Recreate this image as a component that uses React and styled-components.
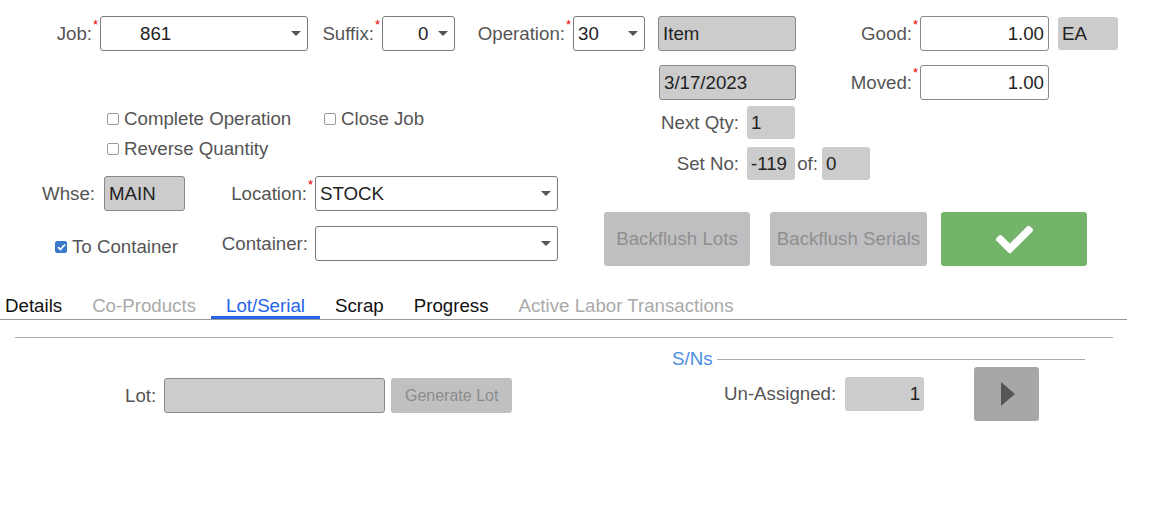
import styled, { createGlobalStyle } from "styled-components";
import { FaCheck } from "react-icons/fa";

const GlobalStyle = createGlobalStyle`
  body {
    margin: 0;
    background: #fff;
    font-family: "Liberation Sans", Arial, sans-serif;
    font-size: 18.7px;
    color: #222;
  }
`;

const Page = styled.div`
  width: 1171px;
`;

const TopRow = styled.div`
  display: flex;
  align-items: center;
  height: 35px;
  padding-top: 16px;
`;

const Label = styled.div`
  display: flex;
  justify-content: flex-end;
  align-items: center;
  align-self: stretch;
  box-sizing: border-box;
  width: ${(p) => p.$w}px;
  padding-left: ${(p) => p.$pl || 0}px;
  padding-right: ${(p) => p.$pr || 0}px;
  color: #555;
  white-space: nowrap;
`;

const Req = styled.span`
  align-self: flex-start;
  width: 7px;
  margin-top: 2px;
  padding-left: 1px;
  color: #e00;
  font-size: 13px;
  line-height: 1;
`;

const Select = styled.div`
  display: flex;
  align-items: center;
  box-sizing: border-box;
  width: ${(p) => p.$w}px;
  height: 35px;
  padding-left: ${(p) => p.$pl ?? 4}px;
  padding-right: 6px;
  border: 1px solid #7a7a7a;
  border-radius: 3px;
  background: #fff;
  color: #222;
`;

const Caret = styled.span`
  margin-left: auto;
  width: 0;
  height: 0;
  border-left: 5px solid transparent;
  border-right: 5px solid transparent;
  border-top: 5px solid #555;
`;

const Field = styled.div`
  display: flex;
  align-items: center;
  justify-content: ${(p) => (p.$right ? "flex-end" : "flex-start")};
  box-sizing: border-box;
  width: ${(p) => p.$w}px;
  height: ${(p) => p.$h || 35}px;
  padding: 0 4px;
  background: ${(p) => (p.$grey ? "#cccccc" : "#fff")};
  border: ${(p) => (p.$bare ? "none" : "1px solid #888")};
  border-radius: 3px;
  color: #222;
  white-space: nowrap;
`;

const Spacer = styled.div`
  width: ${(p) => p.$w}px;
  flex: none;
`;

const Section = styled.div`
  display: flex;
  align-items: flex-start;
`;

const LeftCol = styled.div`
  width: 604px;
  padding-top: 57px;
`;

const RightCol = styled.div`
  flex: 1;
  padding-top: 13px;
`;

const CheckRow = styled.div`
  display: flex;
  align-items: center;
  height: 22px;
  padding-left: 107px;
  margin-top: ${(p) => p.$mt || 0}px;
`;

const CheckItem = styled.label`
  display: flex;
  align-items: center;
  gap: 5px;
  width: ${(p) => (p.$w ? `${p.$w}px` : "auto")};
  color: #555;
  white-space: nowrap;
`;

const Box = styled.span`
  display: flex;
  align-items: center;
  justify-content: center;
  box-sizing: border-box;
  width: 12px;
  height: 12px;
  border: 1px solid ${(p) => (p.$on ? "#3a78c9" : "#9a9a9a")};
  border-radius: 2px;
  background: ${(p) => (p.$on ? "#3a78c9" : "#fff")};
`;

const WhseGrid = styled.div`
  display: grid;
  grid-template-columns: 104px 81px 130px 243px;
  grid-auto-rows: 35px;
  row-gap: 15px;
  margin-top: 16px;
`;

const ToContainer = styled.div`
  grid-column: 1 / 3;
  display: flex;
  align-items: center;
  padding-left: 55px;
  padding-top: 7px;
`;

const RRow = styled.div`
  display: flex;
  align-items: center;
  height: ${(p) => p.$h}px;
  margin-top: ${(p) => p.$mt || 0}px;
  padding-left: ${(p) => p.$pl || 0}px;
`;

const ActionButton = styled.div`
  display: flex;
  align-items: center;
  justify-content: center;
  box-sizing: border-box;
  width: ${(p) => p.$w}px;
  height: 54px;
  margin-right: ${(p) => p.$mr || 0}px;
  border-radius: 3px;
  background: ${(p) => (p.$ok ? "#74b36a" : "#bfbfc1")};
  color: ${(p) => (p.$ok ? "#fff" : "#8f8f8f")};
  white-space: nowrap;
`;

const TabBar = styled.div`
  display: flex;
  width: 1127px;
  margin-top: 25px;
  border-bottom: 1px solid #999;
`;

const Tab = styled.div`
  box-sizing: border-box;
  height: 28px;
  padding: 5px 15px 0;
  line-height: 20px;
  border-bottom: 3px solid ${(p) => (p.$active ? "#2563eb" : "transparent")};
  color: ${(p) => (p.$active ? "#2563eb" : p.$off ? "#aaaaaa" : "#111")};
  white-space: nowrap;

  &:first-child {
    padding-left: 5px;
  }
`;

const Panel = styled.div`
  display: flex;
  width: 1098px;
  margin: 17px 0 0 15px;
  border-top: 1px solid #aaa;
`;

const LotPane = styled.div`
  width: 657px;
  padding: 40px 0 0 110px;
  box-sizing: border-box;
  display: flex;
  align-items: center;
  align-self: flex-start;
`;

const LotLabel = styled.span`
  color: #555;
  margin-right: 8px;
`;

const GenButton = styled.div`
  display: flex;
  align-items: center;
  justify-content: center;
  width: 121px;
  height: 35px;
  margin-left: 6px;
  border-radius: 3px;
  background: #c0c0c0;
  color: #8c8c8c;
  font-size: 16px;
`;

const SnPane = styled.div`
  width: 413px;
  padding-top: 13px;
`;

const Legend = styled.div`
  display: flex;
  align-items: center;
  height: 16px;
  line-height: 16px;
  color: #4a8ee0;
`;

const LegendLine = styled.div`
  flex: 1;
  height: 1px;
  margin-left: 4px;
  background: #aaa;
`;

const SnRow = styled.div`
  display: flex;
  align-items: center;
  padding-left: 52px;
`;

const SnLabel = styled.span`
  color: #555;
  margin-right: 9px;
`;

const PlayButton = styled.div`
  display: flex;
  align-items: center;
  justify-content: center;
  width: 65px;
  height: 54px;
  margin-left: 50px;
  border-radius: 3px;
  background: #a7a7a9;
`;

const Triangle = styled.span`
  width: 0;
  height: 0;
  margin-left: 3px;
  border-top: 12px solid transparent;
  border-bottom: 12px solid transparent;
  border-left: 14px solid #555;
`;

const Check = ({ on, w, children }) => (
  <CheckItem $w={w}>
    <Box $on={on}>
      {on && (
        <svg width="9" height="8" viewBox="0 0 9 8">
          <path d="M1 4.2 L3.4 6.5 L8 1.5" fill="none" stroke="#fff" strokeWidth="1.8" />
        </svg>
      )}
    </Box>
    {children}
  </CheckItem>
);

export default function App() {
  return (
    <Page>
      <GlobalStyle />
      <TopRow>
        <Label $w={100}>
          Job:<Req>*</Req>
        </Label>
        <Select $w={208} $pl={39}>
          861<Caret />
        </Select>
        <Label $w={74}>
          Suffix:<Req>*</Req>
        </Label>
        <Select $w={73} $pl={35}>
          0<Caret />
        </Select>
        <Label $w={118}>
          Operation:<Req>*</Req>
        </Label>
        <Select $w={72}>
          30<Caret />
        </Select>
        <Spacer $w={13} />
        <Field $w={138} $grey>Item</Field>
        <Label $w={124}>
          Good:<Req>*</Req>
        </Label>
        <Field $w={129} $right>1.00</Field>
        <Spacer $w={9} />
        <Field $w={60} $h={33} $grey $bare>EA</Field>
      </TopRow>

      <Section>
        <LeftCol>
          <CheckRow>
            <Check w={217}>Complete Operation</Check>
            <Check>Close Job</Check>
          </CheckRow>
          <CheckRow $mt={8}>
            <Check>Reverse Quantity</Check>
          </CheckRow>
          <WhseGrid>
            <Label $w={104} $pr={9}>Whse:</Label>
            <Field $w={81} $grey>MAIN</Field>
            <Label $w={130}>
              Location:<Req>*</Req>
            </Label>
            <Select $w={243}>
              STOCK<Caret />
            </Select>
            <ToContainer>
              <Check on>To Container</Check>
            </ToContainer>
            <Label $w={130} $pr={7}>Container:</Label>
            <Select $w={243}>
              <Caret />
            </Select>
          </WhseGrid>
        </LeftCol>

        <RightCol>
          <RRow $h={37} $pl={55}>
            <Field $w={137} $grey>3/17/2023</Field>
            <Label $w={124}>
              Moved:<Req>*</Req>
            </Label>
            <Field $w={129} $right>1.00</Field>
          </RRow>
          <RRow $h={33} $mt={5}>
            <Label $w={143} $pr={8}>Next Qty:</Label>
            <Field $w={48} $h={33} $grey $bare>1</Field>
          </RRow>
          <RRow $h={33} $mt={8}>
            <Label $w={143} $pr={8}>Set No:</Label>
            <Field $w={48} $h={33} $grey $bare>-119</Field>
            <Label $w={27} $pr={4}>of:</Label>
            <Field $w={48} $h={33} $grey $bare>0</Field>
          </RRow>
          <RRow $h={54} $mt={32}>
            <ActionButton $w={146} $mr={20}>Backflush Lots</ActionButton>
            <ActionButton $w={157} $mr={14}>Backflush Serials</ActionButton>
            <ActionButton $w={146} $ok>
              <FaCheck size={37} />
            </ActionButton>
          </RRow>
        </RightCol>
      </Section>

      <TabBar>
        <Tab>Details</Tab>
        <Tab $off>Co-Products</Tab>
        <Tab $active>Lot/Serial</Tab>
        <Tab>Scrap</Tab>
        <Tab>Progress</Tab>
        <Tab $off>Active Labor Transactions</Tab>
      </TabBar>

      <Panel>
        <LotPane>
          <LotLabel>Lot:</LotLabel>
          <Field $w={221} $grey />
          <GenButton>Generate Lot</GenButton>
        </LotPane>
        <SnPane>
          <Legend>
            S/Ns
            <LegendLine />
          </Legend>
          <SnRow>
            <SnLabel>Un-Assigned:</SnLabel>
            <Field $w={79} $h={34} $grey $bare $right>1</Field>
            <PlayButton>
              <Triangle />
            </PlayButton>
          </SnRow>
        </SnPane>
      </Panel>
    </Page>
  );
}
